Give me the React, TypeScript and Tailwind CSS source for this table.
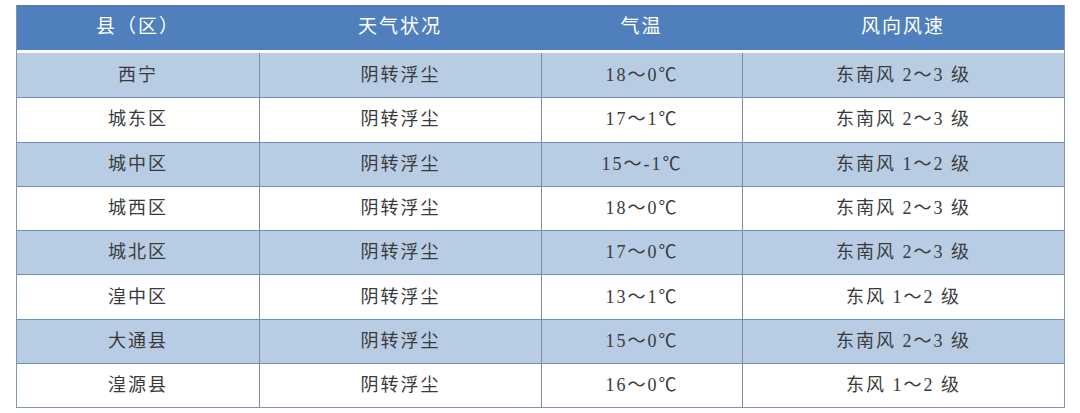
const rows = [
  ['西宁', '阴转浮尘', '18～0℃', '东南风 2～3 级'],
  ['城东区', '阴转浮尘', '17～1℃', '东南风 2～3 级'],
  ['城中区', '阴转浮尘', '15～-1℃', '东南风 1～2 级'],
  ['城西区', '阴转浮尘', '18～0℃', '东南风 2～3 级'],
  ['城北区', '阴转浮尘', '17～0℃', '东南风 2～3 级'],
  ['湟中区', '阴转浮尘', '13～1℃', '东风 1～2 级'],
  ['大通县', '阴转浮尘', '15～0℃', '东南风 2～3 级'],
  ['湟源县', '阴转浮尘', '16～0℃', '东风 1～2 级'],
];

const headers = ['县（区）', '天气状况', '气温', '风向风速'];

const cols = 'grid grid-cols-[242px_282px_201px_1fr]';

export default function App() {
  return (
    <div
      className="h-[413px] w-[1080px] bg-white pl-[16px] pt-[5px]"
      style={{ fontFamily: '"Liberation Serif", "Noto Sans CJK SC", serif' }}
    >
      <div className="w-[1049px] border-x border-b border-[#7f95b3]">
        <div className={`${cols} h-[45px] bg-[#4f7fbd] text-[19px] tracking-[2px] text-white`}>
          {headers.map((h) => (
            <div key={h} className="flex items-center justify-center">
              {h}
            </div>
          ))}
        </div>
        <div className="h-[3px] bg-white" />
        {rows.map((row, i) => (
          <div
            key={row[0]}
            className={`${cols} h-[44.3px] text-[18px] tracking-[2px] text-[#3a3a3a] ${
              i % 2 === 0 ? 'bg-[#b8cce4]' : 'bg-white'
            } ${i > 0 ? 'border-t border-[#6f8fbc]' : ''}`}
          >
            {row.map((cell, j) => (
              <div
                key={j}
                className={`flex items-center justify-center ${
                  j > 0 ? 'border-l border-[#7f8ca0]' : ''
                }`}
              >
                {cell}
              </div>
            ))}
          </div>
        ))}
      </div>
    </div>
  );
}
